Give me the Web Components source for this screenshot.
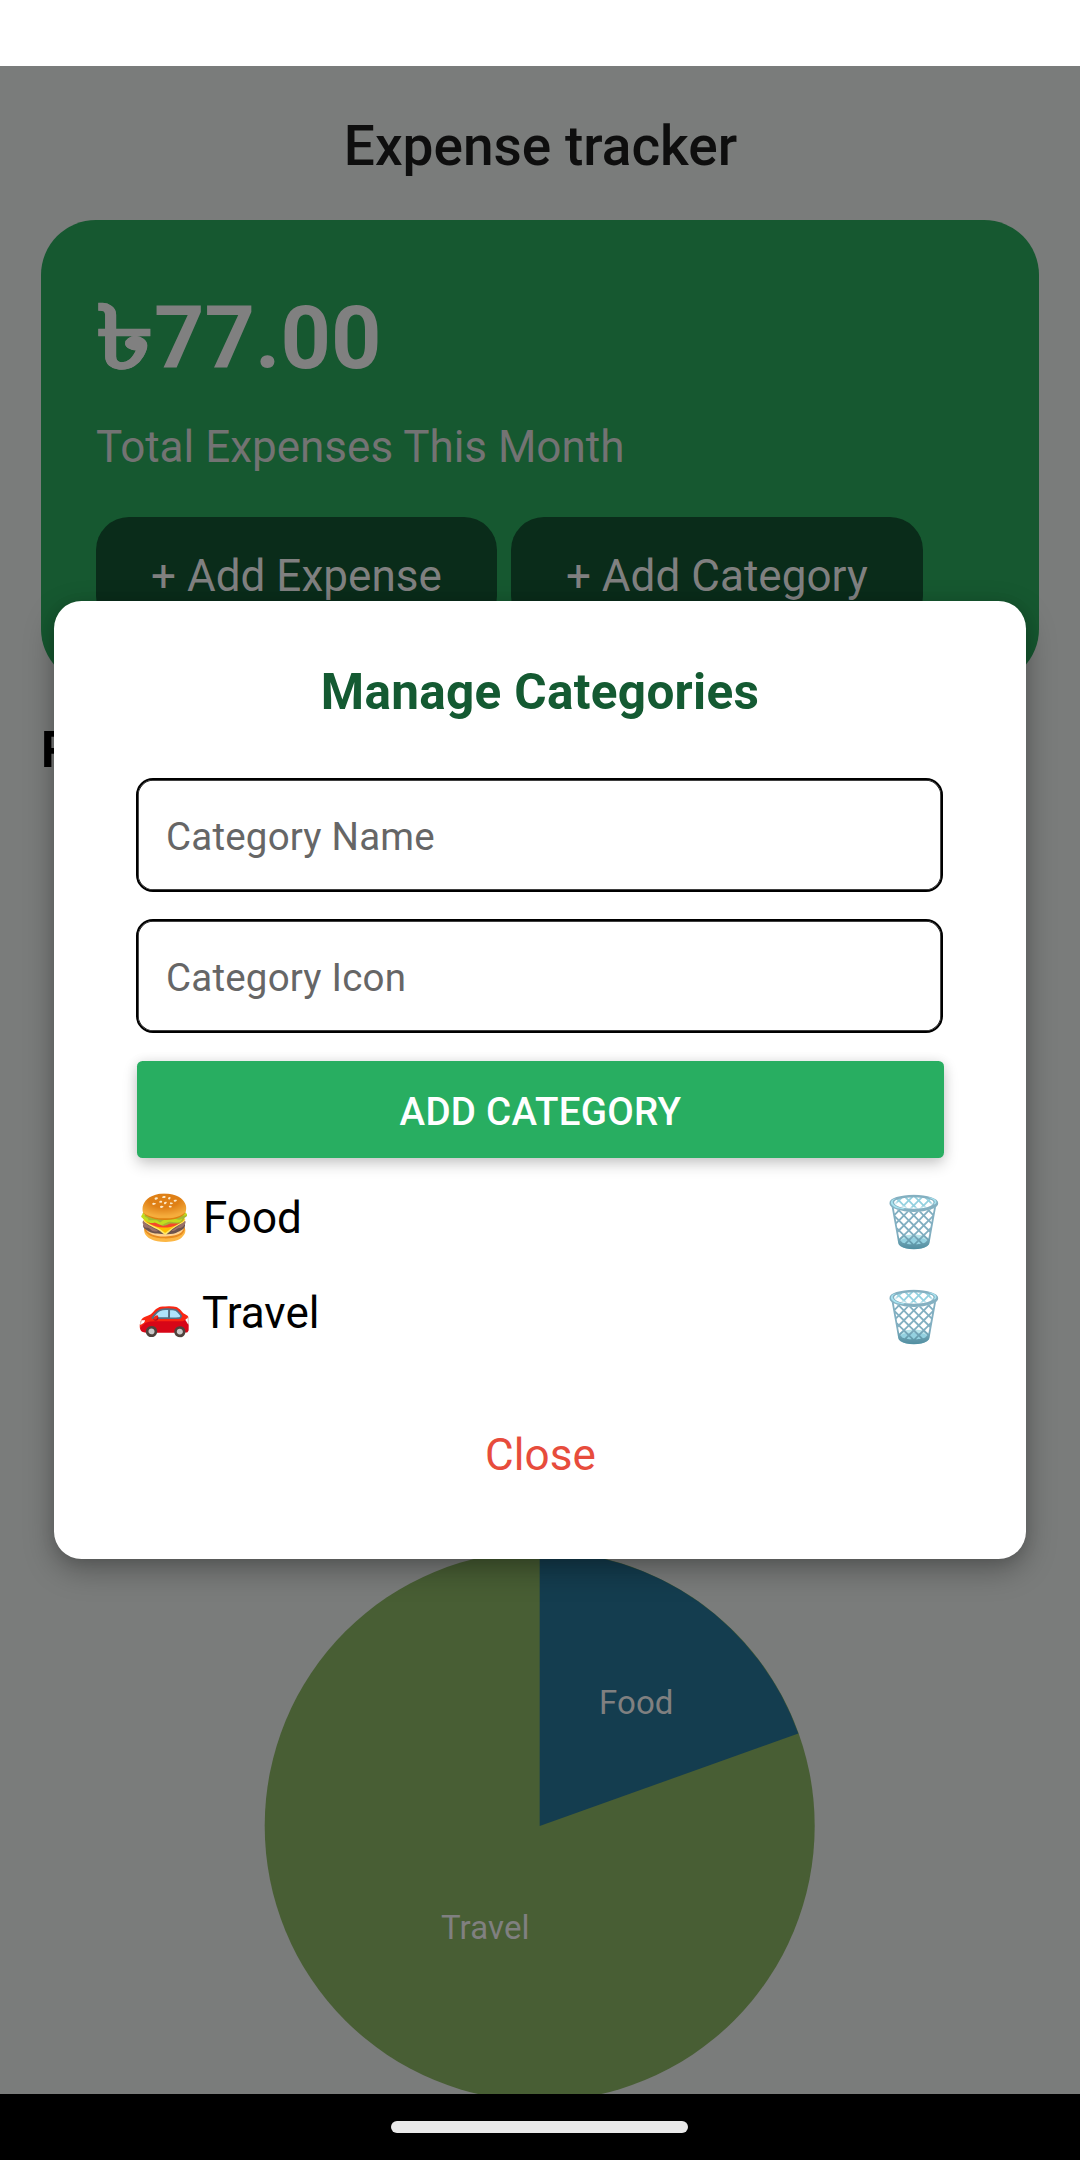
<!DOCTYPE html>
<html lang="en"><head><meta charset="utf-8"><title>Expense tracker</title>
<style>html,body{margin:0;background:#fff}body{width:1080px;height:2160px;overflow:hidden;font-family:Roboto,"Noto Sans",sans-serif}</style>
</head><body>
<expense-app></expense-app>
<script>
const define=(name,html)=>customElements.define(name,class extends HTMLElement{
  constructor(){super();this.attachShadow({mode:'open'}).innerHTML=html;}
});

define('pill-button',`<style>
:host{display:flex;box-sizing:border-box;height:112px;padding:33px 55px 27px;border-radius:33px;background:#0a2c1a;color:#808080;font-size:44px;line-height:52px;letter-spacing:.04px;white-space:nowrap}
</style><slot></slot>`);

define('summary-card',`<style>
:host{display:flex;flex-direction:column;box-sizing:border-box;flex:none;margin:0 41px;height:464px;padding:55px;border-radius:55px;background:#165830;color:#808080}
.amount{display:flex;font-size:88px;font-weight:700;line-height:118px;height:118px;white-space:nowrap;margin-top:4px}
.label{font-size:44px;line-height:52px;color:#737373;margin-top:24px}
.row{display:flex;gap:14px;margin-top:44px}
</style>
<div class="amount"><slot name="amount"></slot></div><div class="label"><slot name="label"></slot></div>
<div class="row"><slot></slot></div>`);

define('taka-sign',`<style>
:host{display:block;width:58px}
span{display:inline-block;transform:scaleX(1.32);transform-origin:0 50%;-webkit-text-stroke:.4px currentColor}
</style><span><slot></slot></span>`);

define('pie-chart',`<style>
:host{display:block;flex:none}svg{display:block;width:1080px;height:560px}
text{font-size:33px;fill:#808080;font-family:Roboto,sans-serif}
</style>
<svg viewBox="0 0 1080 560"><circle cx="539.7" cy="280" r="275" fill="#485e34"/>
<path d="M539.7 280V5A275 275 0 0 1 798.3 187.500Z" fill="#143d4f"/>
<text x="599" y="167.500" letter-spacing=".1">Food</text><text x="441" y="392.500" letter-spacing=".1">Travel</text></svg>`);

define('text-field',`<style>
:host{display:flex;align-items:center;box-sizing:border-box;height:114px;border:2px solid #000;border-radius:17px;padding:3px 0 0 28px;color:#666;font-size:38.5px;line-height:46px;letter-spacing:.2px;box-shadow:inset 0 0 0 .7px #000}
</style><slot></slot>`);

define('raised-button',`<style>
:host{display:flex;align-items:center;justify-content:center;box-sizing:border-box;padding-top:5px;height:97px;border-radius:5.5px;background:#28ae61;color:#fff;font-size:38.5px;font-weight:500;line-height:46px;letter-spacing:.28px;box-shadow:0 6px 15px rgba(0,0,0,.2),0 0 12px rgba(0,0,0,.08)}
</style><slot></slot>`);

define('category-row',`<style>
:host{display:flex;justify-content:space-between;align-items:flex-start;height:95px;font-size:44px;line-height:52px;color:#000}
.name{padding-left:1px;white-space:pre}
.bin{font-size:49.500px;line-height:58px;margin:1px -1px 0 0}
</style><span class="name"><slot></slot></span><span class="bin">🗑️</span>`);

define('category-dialog',`<style>
:host{display:flex;flex-direction:column;box-sizing:border-box;width:972px;height:958px;background:#fff;border-radius:27.500px;padding:55px 82px;box-shadow:0 11px 31px rgba(0,0,0,.29),0 3px 14px rgba(0,0,0,.1)}
h2{margin:7px 0 0;font-size:49.500px;line-height:58px;font-weight:700;letter-spacing:.3px;color:#145a32;text-align:center}
.fields{display:flex;flex-direction:column;gap:27px;margin-top:57px}
text-field{width:807px}
raised-button{margin:28px 0 0 1px;width:807px}
.list{display:flex;flex-direction:column;margin:34px 0 0 0}
.close{align-self:center;margin-top:47px;padding-left:1px;font-size:44px;line-height:52px;letter-spacing:.1px;color:#e74c3c}
</style>
<h2>Manage Categories</h2>
<div class="fields"><text-field>Category Name</text-field><text-field>Category Icon</text-field></div>
<raised-button>ADD CATEGORY</raised-button>
<div class="list"><category-row>🍔 Food</category-row><category-row>🚗 Travel</category-row></div>
<div class="close">Close</div>`);

define('nav-bar',`<style>
:host{display:flex;justify-content:center;align-items:flex-start;box-sizing:border-box;height:66px;padding:27px 2px 0 0;background:#000}
i{width:297px;height:12px;border-radius:6px;background:#e9e9e9}
</style><i></i>`);

define('expense-app',`<style>
:host{display:flex;flex-direction:column;width:1080px;height:2160px;position:relative;overflow:hidden}
.status{height:66px;background:#fff;flex:none}
main{height:2028px;flex:none;overflow:hidden;background:#7a7c7b;display:flex;flex-direction:column}
h1{flex:none;margin:0;padding:48px 0 42px 1px;font-size:55px;line-height:64px;font-weight:500;color:#0e0e0e;text-align:center}
h3{flex:none;margin:37px 41px 0;font-size:49.500px;line-height:58px;font-weight:700;color:#000}
pie-chart{margin-top:767px}
.overlay{position:absolute;left:54px;top:601px}
</style>
<div class="status"></div>
<main><h1>Expense tracker</h1>
<summary-card><taka-sign slot="amount">৳</taka-sign><span slot="amount">77.00</span><span slot="label">Total Expenses This Month</span>
<pill-button>+ Add Expense</pill-button><pill-button>+ Add Category</pill-button></summary-card>
<h3>R</h3><pie-chart></pie-chart></main>
<nav-bar></nav-bar>
<category-dialog class="overlay"></category-dialog>`);
</script></body></html>
